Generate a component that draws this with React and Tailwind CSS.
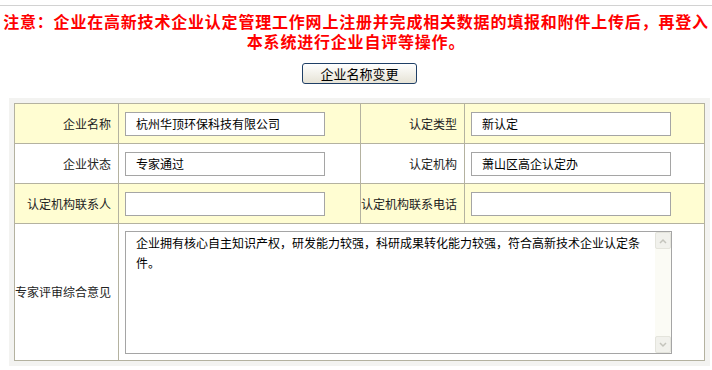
import React from "react";

const font = { fontFamily: '"Noto Sans CJK SC", "Noto Sans", sans-serif' };

function Label({ children, bg }) {
  return (
    <div className={`flex items-center justify-end pr-[7px] border-r border-b border-[#b4b2a0] text-[12px] text-[#222] whitespace-nowrap ${bg}`}>
      {children}
    </div>
  );
}

function Field({ value, bg }) {
  return (
    <div className={`flex items-center pl-[6px] border-r border-b border-[#b4b2a0] ${bg}`}>
      <div className="w-[200px] h-[24px] bg-white border border-[#a5a5a5] pl-[10px] flex items-center text-[12px] text-black whitespace-nowrap">
        {value}
      </div>
    </div>
  );
}

export default function App() {
  const y = "bg-[#fffdd2]";
  const w = "bg-white";
  return (
    <div className="w-[712px] h-[370px] bg-white overflow-hidden" style={font}>
      <div className="h-[5px]" />
      <div className="h-px bg-[#d2d2d2]" />
      <div className="mt-[5px] text-center text-[16px] leading-[20px] font-bold text-[#ff0000] tracking-[0.8px] whitespace-nowrap">
        <div>注意：企业在高新技术企业认定管理工作网上注册并完成相关数据的填报和附件上传后，再登入</div>
        <div>本系统进行企业自评等操作。</div>
      </div>
      <div className="mt-[12px] flex justify-center pl-[7px]">
        <button className="w-[115px] h-[21px] rounded-[3px] border border-[#1f3f66] bg-gradient-to-b from-white to-[#e6e3d6] text-[13px] leading-[19px] text-black">
          企业名称变更
        </button>
      </div>
      <div className="mt-[14px] ml-[9px] w-[701px] bg-[#f3f3f1] pt-[5px] pl-[5px] pr-[5px] pb-[5px]">
        <div className="grid grid-cols-[104px_242px_104px_240px] grid-rows-[40px_40px_40px_137px] border-l border-t border-[#b4b2a0] w-[691px]">
          <Label bg={y}>企业名称</Label>
          <Field bg={y} value="杭州华顶环保科技有限公司" />
          <Label bg={y}>认定类型</Label>
          <Field bg={y} value="新认定" />

          <Label bg={w}>企业状态</Label>
          <Field bg={w} value="专家通过" />
          <Label bg={w}>认定机构</Label>
          <Field bg={w} value="萧山区高企认定办" />

          <Label bg={y}>认定机构联系人</Label>
          <Field bg={y} value="" />
          <div className={`flex items-center justify-end pr-[7px] border-r border-b border-[#b4b2a0] text-[12px] text-[#222] whitespace-nowrap ${y}`}>
            认定机构联系电话
          </div>
          <Field bg={y} value="" />

          <Label bg={w}>专家评审综合意见</Label>
          <div className="col-span-3 border-r border-b border-[#b4b2a0] bg-white pl-[6px] pt-[7px]">
            <div className="w-[547px] h-[123px] border border-[#a5a5a5] bg-white flex">
              <div className="flex-1 pl-[10px] pt-[1px] text-[12px] leading-[20px] text-black whitespace-nowrap">
                企业拥有核心自主知识产权，研发能力较强，科研成果转化能力较强，符合高新技术企业认定条
                <br />
                件。
              </div>
              <div className="w-[16px] bg-[#fbfbf5] flex flex-col justify-between">
                <div className="h-[17px] w-[16px] border border-[#e4e4dc] rounded-[2px] bg-[#f1f1ec] flex items-center justify-center">
                  <svg width="8" height="6" viewBox="0 0 8 6">
                    <path d="M1 5 L4 2 L7 5" fill="none" stroke="#c4c4bc" strokeWidth="1.5" />
                  </svg>
                </div>
                <div className="h-[17px] w-[16px] border border-[#e4e4dc] rounded-[2px] bg-[#f1f1ec] flex items-center justify-center">
                  <svg width="8" height="6" viewBox="0 0 8 6">
                    <path d="M1 1 L4 4 L7 1" fill="none" stroke="#c4c4bc" strokeWidth="1.5" />
                  </svg>
                </div>
              </div>
            </div>
          </div>
        </div>
      </div>
    </div>
  );
}
